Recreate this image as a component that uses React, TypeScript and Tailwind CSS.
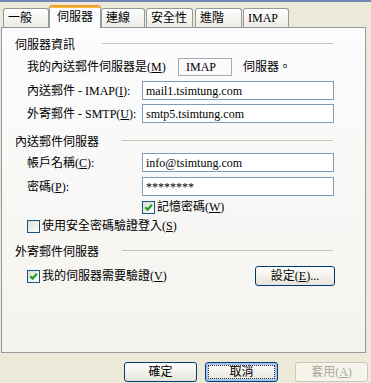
import type { ReactNode } from 'react';

function Check({ checked }: { checked?: boolean }) {
  return (
    <span className="w-[13px] h-[13px] shrink-0 border border-[#1c5180] bg-linear-to-br from-[#dcdcd7] to-white flex items-center justify-center">
      {checked && (
        <svg width="9" height="9" viewBox="0 0 9 9">
          <path d="M1.2 4.2 L3.6 6.6 L7.9 1.8" stroke="#21a121" strokeWidth="2.2" fill="none" />
        </svg>
      )}
    </span>
  );
}

function Field({ value }: { value: string }) {
  return (
    <div className="w-[192px] h-[19px] bg-white border border-[#7f9db9] flex items-center pl-[3px] leading-none">
      {value}
    </div>
  );
}

function Heading({ text, line, mt }: { text: string; line: string; mt: string }) {
  return (
    <div className={`flex items-center h-[14px] pl-[13px] pr-[32px] ${mt}`}>
      <span>{text}</span>
      <span className={`ml-auto h-px bg-[#c7c5b2] mb-[3px] ${line}`} />
    </div>
  );
}

function Tab({ label, w, active }: { label: string; w: string; active?: boolean }) {
  if (active) {
    return (
      <div className={`relative z-10 -mb-px h-[23px] ${w} bg-[#fcfcfe] border-x border-[#919b9c] rounded-t-[3px] overflow-hidden`}>
        <div className="h-[3px] bg-linear-to-b from-[#e68b2c] to-[#ffc73c]" />
        <div className="pl-[7px] pt-[1px] leading-[16px]">{label}</div>
      </div>
    );
  }
  return (
    <div className={`h-[19px] ${w} border border-b-0 border-[#919b9c] rounded-t-[3px] bg-linear-to-b from-white to-[#ecebe6] pl-[4px] leading-[18px]`}>
      {label}
    </div>
  );
}

function Button({ children, focused, disabled, w }: { children: ReactNode; focused?: boolean; disabled?: boolean; w: string }) {
  if (disabled) {
    return (
      <div className={`${w} h-[20px] rounded-[3px] border border-[#c9c7ba] bg-[#f5f4ea] text-[#aca899] flex items-center justify-center`}>
        {children}
      </div>
    );
  }
  return (
    <div className={`${w} h-[20px] rounded-[3px] border border-[#003c74] bg-linear-to-b from-white to-[#e6e4da] flex items-center justify-center p-[2px] ${focused ? 'shadow-[inset_0_0_0_2px_#a8c4f0]' : ''}`}>
      <div className={`w-full h-full flex items-center justify-center ${focused ? 'outline outline-1 outline-dotted outline-[#333] -outline-offset-1' : ''}`}>
        {children}
      </div>
    </div>
  );
}

export default function App() {
  return (
    <div className="w-[371px] h-[383px] bg-[#ece9d8] overflow-hidden text-[12px] text-black font-['Liberation_Serif','Noto_Sans_CJK_TC',serif]">
      <div className="h-[2px] bg-[#6f88b4]" />

      {/* tabs */}
      <div className="flex items-end h-[25px] pl-[3px]">
        <Tab label="一般" w="w-[46px]" />
        <Tab label="伺服器" w="w-[52px]" active />
        <Tab label="連線" w="w-[44px]" />
        <div className="w-[1px]" />
        <Tab label="安全性" w="w-[47px]" />
        <div className="w-[2px]" />
        <Tab label="進階" w="w-[47px]" />
        <div className="w-[1px]" />
        <Tab label="IMAP" w="w-[46px]" />
      </div>

      {/* panel */}
      <div className="ml-[1px] w-[365px] h-[326px] border border-[#919b9c] bg-linear-to-b from-[#fcfcfe] to-[#f4f3ee]">
        <Heading text="伺服器資訊" line="w-[231px]" mt="mt-[10px]" />

        <div className="flex items-center h-[18px] pl-[25px] mt-[6px]">
          <span className="w-[151px]">我的內送郵件伺服器是(<span className="underline">M</span>)</span>
          <div className="w-[54px] h-[18px] border border-[#a5acb5] flex items-center pl-[7px]">IMAP</div>
          <span className="ml-[11px]">伺服器。</span>
        </div>

        <div className="flex items-center h-[19px] pl-[25px] mt-[5px]">
          <span className="w-[115px]">內送郵件 - IMAP(<span className="underline">I</span>):</span>
          <Field value="mail1.tsimtung.com" />
        </div>

        <div className="flex items-center h-[19px] pl-[25px] mt-[4px]">
          <span className="w-[115px]">外寄郵件 - SMTP(<span className="underline">U</span>):</span>
          <Field value="smtp5.tsimtung.com" />
        </div>

        <Heading text="內送郵件伺服器" line="w-[211px]" mt="mt-[12px]" />

        <div className="flex items-center h-[19px] pl-[25px] mt-[4px]">
          <span className="w-[115px]">帳戶名稱(<span className="underline">C</span>):</span>
          <Field value="info@tsimtung.com" />
        </div>

        <div className="flex items-center h-[19px] pl-[25px] mt-[5px]">
          <span className="w-[115px]">密碼(<span className="underline">P</span>):</span>
          <Field value="********" />
        </div>

        <div className="flex items-center h-[14px] pl-[140px] mt-[4px] gap-[2px]">
          <Check checked />
          <span>記憶密碼(<span className="underline">W</span>)</span>
        </div>

        <div className="flex items-center h-[14px] pl-[25px] mt-[5px] gap-[2px]">
          <Check />
          <span>使用安全密碼驗證登入(<span className="underline">S</span>)</span>
        </div>

        <Heading text="外寄郵件伺服器" line="w-[211px]" mt="mt-[12px]" />

        <div className="flex items-center h-[20px] pl-[25px] pr-[30px] mt-[7px] gap-[2px]">
          <Check checked />
          <span>我的伺服器需要驗證(<span className="underline">V</span>)</span>
          <div className="ml-auto">
            <Button w="w-[80px]">設定(<span className="underline">E</span>)...</Button>
          </div>
        </div>
      </div>

      {/* dialog buttons */}
      <div className="flex justify-end gap-[8px] pr-[3px] mt-[9px]">
        <Button w="w-[73px]">確定</Button>
        <Button w="w-[73px]" focused>取消</Button>
        <div className="w-px" />
        <Button w="w-[73px]" disabled>套用(<span className="underline">A</span>)</Button>
      </div>
    </div>
  );
}
